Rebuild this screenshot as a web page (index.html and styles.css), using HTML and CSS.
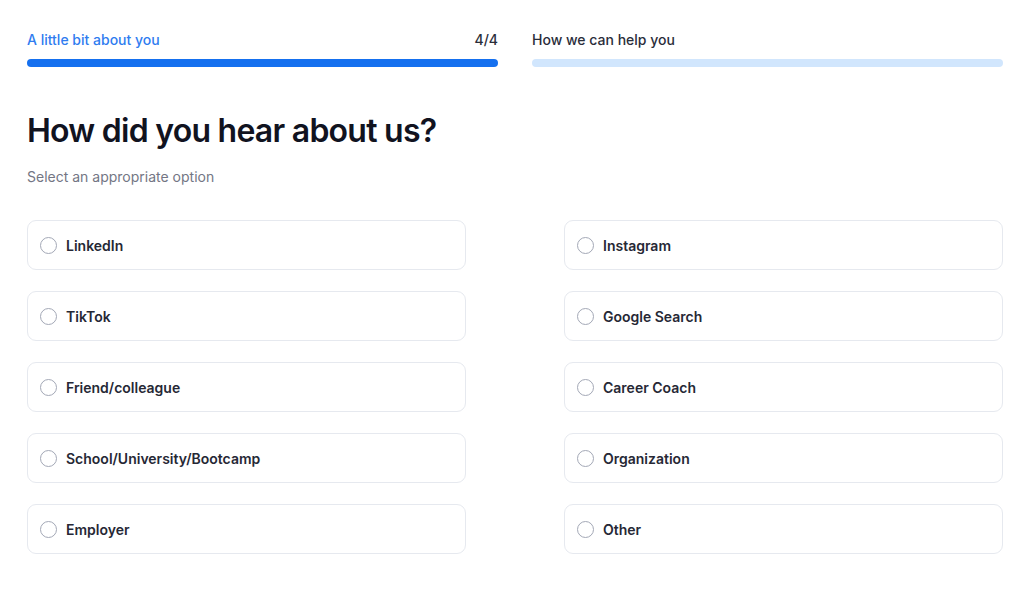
FILE: index.html
```html
<!DOCTYPE html>
<html lang="en">

<head>
    <meta charset="UTF-8">
    <meta name="viewport" content="width=device-width, initial-scale=1.0">
    <title>How did you hear about us?</title>
    <link rel="stylesheet" href="styles.css">
</head>

<body>
    <div class="container">
        <div class="steps">
            <div class="step">
                <div class="step-head">
                    <span class="step-title active">A little bit about you</span>
                    <span class="step-count">4/4</span>
                </div>
                <div class="bar bar-done"></div>
            </div>
            <div class="step">
                <div class="step-head">
                    <span class="step-title">How we can help you</span>
                </div>
                <div class="bar bar-todo"></div>
            </div>
        </div>

        <h1>How did you hear about us?</h1>
        <p class="subtitle">Select an appropriate option</p>

        <form class="options">
            <label class="option"><input type="radio" name="source"><span>LinkedIn</span></label>
            <label class="option"><input type="radio" name="source"><span>Instagram</span></label>
            <label class="option"><input type="radio" name="source"><span>TikTok</span></label>
            <label class="option"><input type="radio" name="source"><span>Google Search</span></label>
            <label class="option"><input type="radio" name="source"><span>Friend/colleague</span></label>
            <label class="option"><input type="radio" name="source"><span>Career Coach</span></label>
            <label class="option"><input type="radio" name="source"><span>School/University/Bootcamp</span></label>
            <label class="option"><input type="radio" name="source"><span>Organization</span></label>
            <label class="option"><input type="radio" name="source"><span>Employer</span></label>
            <label class="option"><input type="radio" name="source"><span>Other</span></label>
        </form>
    </div>
</body>

</html>
```

FILE: styles.css
```css
body {
    margin: 0;
    font-family: Inter, "Noto Sans", sans-serif;
    color: #1b1d29;
    background: #fff;
}

.container {
    width: 976px;
    padding: 31px 0 0 27px;
}

.steps {
    display: grid;
    grid-template-columns: 1fr 1fr;
    gap: 34px;
}

.step-head {
    display: flex;
    justify-content: space-between;
    font-size: 14px;
    line-height: 18px;
    height: 18px;
    font-weight: 500;
}

.step-title {
    color: #2a2d3a;
}

.step-title.active {
    color: #2f7cf0;
}

.step-count {
    color: #2a2d3a;
}

.bar {
    height: 8px;
    border-radius: 4px;
    margin-top: 10px;
}

.bar-done {
    background: #1570ef;
}

.bar-todo {
    background: #d1e6fd;
}

h1 {
    margin: 44px 0 0;
    font-size: 32px;
    line-height: 40px;
    font-weight: 600;
    letter-spacing: -0.75px;
    color: #11131f;
}

.subtitle {
    margin: 16px 0 0;
    font-size: 14px;
    line-height: 20px;
    color: #737684;
}

.options {
    display: grid;
    grid-template-columns: 439px 439px;
    column-gap: 98px;
    row-gap: 21px;
    margin-top: 33px;
}

.option {
    display: flex;
    align-items: center;
    height: 48px;
    padding: 0 12px;
    border: 1px solid #e6e9ef;
    border-radius: 9px;
    font-size: 14px;
    font-weight: 600;
    color: #262835;
    cursor: pointer;
}

.option input {
    appearance: none;
    width: 17px;
    height: 17px;
    margin: 0 9px 0 0;
    border: 1px solid #a3a8b6;
    border-radius: 50%;
    background: #fff;
}
```
